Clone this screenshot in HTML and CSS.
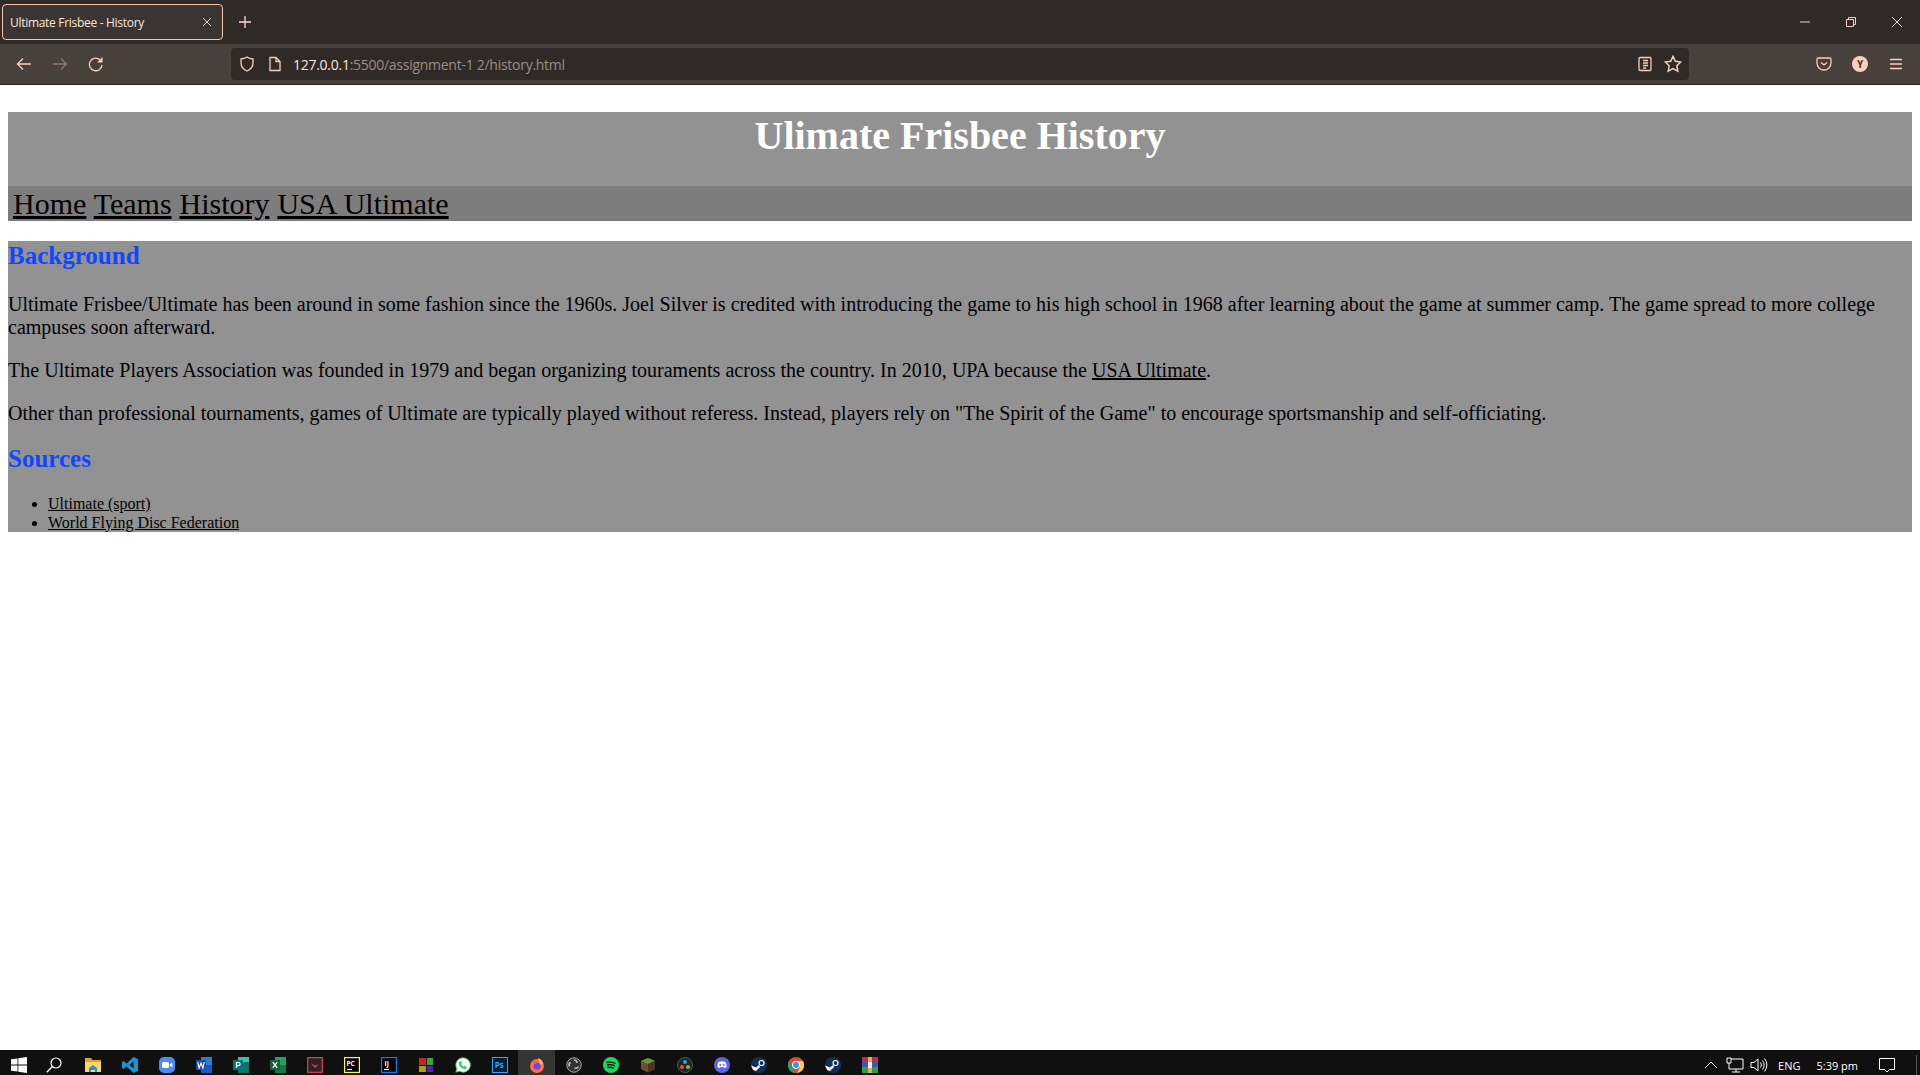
FILE: index.html
```html
<!DOCTYPE html>
<html lang="en">
<head>
<meta charset="utf-8">
<title>Ultimate Frisbee - History</title>
<link rel="stylesheet" href="styles.css">
</head>
<body>
<div class="window">
  <div class="tabbar">
    <div class="tab">
      <span class="tab-title">Ultimate Frisbee - History</span>
      <svg class="tab-close" viewBox="0 0 10 10"><path d="M1 1l8 8M9 1l-8 8"/></svg>
    </div>
    <svg class="new-tab" viewBox="0 0 12 12"><path d="M6 0v12M0 6h12"/></svg>
    <div class="win-controls">
      <svg class="win-btn" viewBox="0 0 12 12"><path d="M1 6h10"/></svg>
      <svg class="win-btn" viewBox="0 0 12 12"><path d="M1.500 3.500h7v7h-7zM3.500 3.500v-2h7v7h-2"/></svg>
      <svg class="win-btn" viewBox="0 0 12 12"><path d="M1 1l10 10M11 1L1 11"/></svg>
    </div>
  </div>
  <div class="toolbar">
    <div class="nav-btns">
      <span class="tb-cell"><svg class="ic" viewBox="0 0 16 16"><path d="M15 8H1.500M7 2.500L1.500 8 7 13.500"/></svg></span>
      <span class="tb-cell dim"><svg class="ic" viewBox="0 0 16 16"><path d="M1 8h13.500M9 2.500L14.500 8 9 13.500"/></svg></span>
      <span class="tb-cell"><svg class="ic" viewBox="0 0 16 16"><path d="M14 9a6.300 6.300 0 1 1-2-5.200"/><path class="ic-fill" d="M14.500 1v5.500H9z"/></svg></span>
    </div>
    <div class="urlbar">
      <svg class="ic shield" viewBox="0 0 16 16"><path d="M8 1c2 1.300 4 1.800 6 2v4c0 4-2.500 6.500-6 8-3.500-1.500-6-4-6-8V3c2-.2 4-.7 6-2z"/></svg>
      <svg class="ic page" viewBox="0 0 16 16"><path d="M3 1.500h6l4 4v9H3zM9 1.500v4h4"/></svg>
      <span class="url"><span class="url-host">127.0.0.1</span>:5500/assignment-1 2/history.html</span>
      <svg class="ic reader" viewBox="0 0 16 16"><path d="M3 1.500h10a1 1 0 0 1 1 1v11a1 1 0 0 1-1 1H3a1 1 0 0 1-1-1v-11a1 1 0 0 1 1-1zM6 4.500h5M6 7h5M6 9.500h5M6 12h3"/></svg>
      <svg class="ic star" viewBox="0 0 16 16"><path d="M8 1.200l2.100 4.400 4.800.6-3.500 3.300.9 4.800L8 12l-4.300 2.300.9-4.800L1.100 6.200l4.800-.6z"/></svg>
    </div>
    <div class="nav-btns">
      <span class="tb-cell"><svg class="ic" viewBox="0 0 16 16"><path d="M2.500 2h11A1.500 1.500 0 0 1 15 3.500V7a7 7 0 0 1-14 0V3.500A1.500 1.500 0 0 1 2.500 2zM5 6.500L8 9l3-2.500"/></svg></span>
      <span class="tb-cell"><span class="avatar">Y</span></span>
      <span class="tb-cell"><svg class="ic" viewBox="0 0 16 16"><path d="M2 3.500h12M2 8h12M2 12.500h12"/></svg></span>
    </div>
  </div>
  <main class="page-area">
    <header class="site-header">
      <h1>Ulimate Frisbee History</h1>
      <nav class="site-nav">
        <a href="#">Home</a>
        <a href="#">Teams</a>
        <a href="#">History</a>
        <a href="#">USA Ultimate</a>
      </nav>
    </header>
    <section class="content">
      <h2>Background</h2>
      <p>Ultimate Frisbee/Ultimate has been around in some fashion since the 1960s. Joel Silver is credited with introducing the game to his high school in 1968 after learning about the game at summer camp. The game spread to more college campuses soon afterward.</p>
      <p class="wide">The Ultimate Players Association was founded in 1979 and began organizing touraments across the country. In 2010, UPA because the <a href="#">USA Ultimate</a>.</p>
      <p>Other than professional tournaments, games of Ultimate are typically played without referess. Instead, players rely on "The Spirit of the Game" to encourage sportsmanship and self-officiating.</p>
      <h2>Sources</h2>
      <ul>
        <li><a href="#">Ultimate (sport)</a></li>
        <li><a href="#">World Flying Disc Federation</a></li>
      </ul>
    </section>
  </main>
  <footer class="taskbar">
    <span class="task"><svg class="ti" viewBox="0 0 16 16"><path fill="#fff" d="M0 2.300l6.500-.9v6.200H0zM7.300 1.300L16 0v7.600H7.300zM0 8.400h6.500v6.200L0 13.700zM7.300 8.400H16V16l-8.700-1.200z"/></svg></span>
    <span class="task"><svg class="ti search-ic" viewBox="0 0 16 16"><circle cx="10" cy="6" r="5" fill="none" stroke="#fff" stroke-width="1.200"/><path d="M6.400 9.600L.8 15.300" stroke="#fff" stroke-width="1.400"/></svg></span>
    <span class="task"><svg class="ti" viewBox="0 0 16 16"><path fill="#d9a531" d="M0 1h6l1.500 2H16v3H0z"/><path fill="#ffd665" d="M0 5h16v10H0z"/><path fill="#2b8ed8" d="M4 11l4-3 4 3v4H10v-2H6v2H4z"/></svg></span>
    <span class="task"><svg class="ti" viewBox="0 0 16 16"><path fill="#1f8fd6" d="M11.500 0L16 2v12l-4.500 2L4.500 9.600 1.500 12 0 11V5l1.500-1 3 2.400zM11.500 4.500L7.500 8l4 3.500z"/></svg></span>
    <span class="task"><svg class="ti" viewBox="0 0 16 16"><rect width="16" height="16" rx="5" fill="#4a8cf7"/><rect x="3" y="5" width="7" height="6" rx="1.500" fill="#fff"/><path fill="#fff" d="M10.800 7.500l2.500-2v5l-2.500-2z"/></svg></span>
    <span class="task"><svg class="ti" viewBox="0 0 16 16"><path fill="#2b7cd3" d="M5 0h11v16H5z"/><path fill="#185abd" d="M5 8h11v8H5z"/><rect y="3" width="10" height="10" fill="#1a4fa3"/><path d="M1.800 5l1.300 6 1.900-5 1.900 5 1.300-6" fill="none" stroke="#fff" stroke-width="1.100"/></svg></span>
    <span class="task"><svg class="ti" viewBox="0 0 16 16"><path fill="#33c4b8" d="M5 0h11v16H5z"/><path fill="#077568" d="M11 5h5v11H5v-3z"/><rect y="3" width="10" height="10" fill="#03787c"/><path d="M3.500 11V5.500h2a1.600 1.600 0 0 1 0 3.200h-2" fill="none" stroke="#fff" stroke-width="1.200"/></svg></span>
    <span class="task"><svg class="ti" viewBox="0 0 16 16"><path fill="#21a366" d="M5 0h11v8H5z"/><path fill="#107c41" d="M5 8h11v8H5z"/><rect y="3" width="10" height="10" fill="#185c37"/><path d="M2.800 5.200l4.400 5.600M7.200 5.200l-4.400 5.600" stroke="#fff" stroke-width="1.300"/></svg></span>
    <span class="task"><svg class="ti" viewBox="0 0 16 16"><rect x=".7" y=".7" width="14.600" height="14.600" fill="#2a2326" stroke="#e6404f" stroke-width="1.200"/><path d="M4 6l3.500 4.500h1.500L12 6.500 9.500 8.500H8z" fill="#e6404f"/></svg></span>
    <span class="task"><svg class="ti" viewBox="0 0 16 16"><rect x=".6" y=".6" width="14.800" height="14.800" fill="#000" stroke="#fcf84a" stroke-width="1.200"/><text class="logo-text" x="2.500" y="8.600">PC</text><path d="M3 12.500h5" stroke="#fff" stroke-width="1.200"/></svg></span>
    <span class="task"><svg class="ti" viewBox="0 0 16 16"><rect x=".6" y=".6" width="14.800" height="14.800" fill="#000" stroke="#087cfa" stroke-width="1.200"/><text class="logo-text" x="3.500" y="8.600">IJ</text><path d="M3 12.500h5" stroke="#fff" stroke-width="1.200"/></svg></span>
    <span class="task"><svg class="ti" viewBox="0 0 16 16"><path fill="#c4281c" d="M1 1h7v7H1z"/><path fill="#3fa535" d="M9 1h6v7H9z"/><path fill="#a6a21c" d="M1 9h7v6H1z"/><path fill="#5b1fb5" d="M9 9h6v6H9z"/></svg></span>
    <span class="task"><svg class="ti" viewBox="0 0 16 16"><path fill="#fff" stroke="#25d366" stroke-width=".8" d="M8 .8a7.200 7.200 0 0 0-6.200 10.800L.8 15.200l3.700-1A7.200 7.200 0 1 0 8 .8z"/><path fill="#25d366" d="M5.500 4c1 0 1.300 2 1.300 2.300 0 .5-.6.900-.5 1.200.5 1 1.300 1.800 2.300 2.200.4 0 .8-.8 1.200-.7.500.1 2 .8 2 1.200 0 1-1 1.700-2 1.700-3.400 0-6-3.500-6-5.700C3.800 5 4.500 4 5.500 4z"/></svg></span>
    <span class="task"><svg class="ti" viewBox="0 0 16 16"><rect x=".5" y=".5" width="15" height="15" fill="#001d34" stroke="#31a8ff"/><text class="logo-text ps" x="2.800" y="11">Ps</text></svg></span>
    <span class="task active"><svg class="ti" viewBox="0 0 16 16"><circle cx="8" cy="9" r="7" fill="#ff7139"/><path d="M9 1c3 1 5 3 5 6l-3 1z" fill="#ffbd4f"/><circle cx="8" cy="9" r="3.500" fill="#7542e5"/><path d="M3 5c2-2 5-1 6 1l-3 1z" fill="#ff4f5e"/></svg></span>
    <span class="task"><svg class="ti" viewBox="0 0 16 16"><circle cx="8" cy="8" r="7.200" fill="#333" stroke="#aaa" stroke-width="1"/><path d="M8 3a3 3 0 0 1 3 3M12.500 9.500a3 3 0 0 1-4 1.500M3.500 9.500a3 3 0 0 1 1-4" fill="none" stroke="#bbb" stroke-width="1.600"/></svg></span>
    <span class="task"><svg class="ti" viewBox="0 0 16 16"><circle cx="8" cy="8" r="8" fill="#1ed760"/><path d="M3.500 5.500c3-.8 6-.6 9 1M4 8c2.600-.7 5.300-.4 7.800.9M4.500 10.500c2.200-.5 4.400-.3 6.500.8" fill="none" stroke="#111" stroke-width="1.300"/></svg></span>
    <span class="task"><svg class="ti" viewBox="0 0 16 16"><path fill="#6f4f32" d="M1 4l7-3 7 3v8l-7 3.500L1 12z"/><path fill="#5f9e34" d="M1 4l7-3 7 3-7 3z"/><path fill="#4a3524" d="M8 7l7-3v8l-7 3.500z"/></svg></span>
    <span class="task"><svg class="ti" viewBox="0 0 16 16"><circle cx="8" cy="8" r="7.500" fill="#20252b" stroke="#555"/><circle cx="8" cy="5" r="2" fill="#3ea5dc"/><circle cx="5" cy="10" r="2" fill="#e2543d"/><circle cx="11" cy="10" r="2" fill="#8fbf3c"/></svg></span>
    <span class="task"><svg class="ti" viewBox="0 0 16 16"><circle cx="8" cy="8" r="8" fill="#5865f2"/><path fill="#fff" d="M4.500 5c2-.9 5-.9 7 0 .8 1.500 1.200 3.300 1 5-1 .7-1.800 1-2.500 1l-.5-1H6.500l-.5 1c-.7 0-1.500-.3-2.500-1-.2-1.700.2-3.500 1-5z"/><circle cx="6.300" cy="8" r="1" fill="#5865f2"/><circle cx="9.700" cy="8" r="1" fill="#5865f2"/></svg></span>
    <span class="task"><svg class="ti" viewBox="0 0 16 16"><circle cx="8" cy="8" r="8" fill="#10305a"/><circle cx="10.500" cy="6" r="2.500" fill="none" stroke="#fff" stroke-width="1.200"/><path fill="#fff" d="M0 8.500l5 2 3-2.500 1 2-3.500 3.500c-1.500.5-3 0-3.500-1z"/></svg></span>
    <span class="task"><svg class="ti" viewBox="0 0 16 16"><circle cx="8" cy="8" r="8" fill="#dd4b39"/><path fill="#1da462" d="M8 16A8 8 0 0 1 1 4l4 7z"/><path fill="#ffcd46" d="M8 4h7a8 8 0 0 1-6 12l3-6z"/><circle cx="8" cy="8" r="3.600" fill="#4c8bf5" stroke="#fff"/></svg></span>
    <span class="task"><svg class="ti" viewBox="0 0 16 16"><circle cx="8" cy="8" r="8" fill="#10305a"/><circle cx="10.500" cy="6" r="2.500" fill="none" stroke="#fff" stroke-width="1.200"/><path fill="#fff" d="M0 8.500l5 2 3-2.500 1 2-3.500 3.500c-1.500.5-3 0-3.500-1z"/></svg></span>
    <span class="task"><svg class="ti" viewBox="0 0 16 16"><path fill="#c2284d" d="M0 0h16v5H0z"/><path fill="#3f55b5" d="M0 5h16v5H0z"/><path fill="#2f9e44" d="M0 10h16v6H0z"/><path fill="#e8b23a" d="M6 0h4v16H6z"/><rect x="6" y="5" width="4" height="6" fill="#eee"/></svg></span>
    <div class="tray">
      <svg class="tray-ic chevron" viewBox="0 0 12 12"><path d="M0 9l6-6 6 6"/></svg>
      <svg class="tray-ic net" viewBox="0 0 18 16"><path d="M5 2h12v10H3M1 1h4v5H1zM3 6v6M10 12v3M6 15h8"/></svg>
      <svg class="tray-ic vol" viewBox="0 0 18 16"><path d="M1 5.500h3L8 2v12l-4-3.500H1zM10.500 5.500a4 4 0 0 1 0 5M12.500 3.500a7 7 0 0 1 0 9M14.500 1.500a10 10 0 0 1 0 13"/></svg>
      <span class="tray-text lang">ENG</span>
      <span class="tray-text clock">5:39 pm</span>
      <svg class="tray-ic note" viewBox="0 0 16 16"><path d="M.5 1.500h15v11h-5l-2.500 2.500-2.500-2.500h-5z"/></svg>
      <span class="show-desktop"></span>
    </div>
  </footer>
</div>
</body>
</html>
```
FILE: styles.css
```css
* { box-sizing: border-box; }
html, body { margin: 0; height: 100%; }
body { overflow: hidden; background: #fff; font-family: "Liberation Serif", serif; }
.window { display: flex; flex-direction: column; height: 1075px; }

.tabbar { flex: 0 0 44px; display: flex; align-items: flex-start; background: #2f2a28; font-family: "Open Sans", sans-serif; }
.tab { width: 221px; height: 36px; margin: 4px 0 0 2px; padding: 0 8px 0 7px; display: flex; align-items: center; justify-content: space-between; background: #3a3533; border: 1px solid #f5c8b0; border-radius: 4px; }
.tab-title { color: #fbe6da; font-size: 12px; letter-spacing: -.3px; white-space: nowrap; }
.tab-close { width: 10px; height: 10px; margin-right: 2px; fill: none; stroke: #e6cfc2; stroke-width: 1; }
.new-tab { width: 12px; height: 12px; margin: 16px 0 0 16px; fill: none; stroke: #fbdccb; stroke-width: 1.300; }
.win-controls { margin-left: auto; display: flex; }
.win-btn { width: 46px; height: 12px; margin-top: 16px; fill: none; stroke: #fbcfb9; stroke-width: 1; }

.toolbar { flex: 0 0 41px; display: flex; align-items: center; padding: 0 6px; background: #48403b; border-bottom: 1px solid #231f1e; font-family: "Open Sans", sans-serif; }
.nav-btns { display: flex; flex: 0 0 108px; }
.tb-cell { width: 36px; height: 32px; display: flex; align-items: center; justify-content: center; }
.dim { opacity: .4; }
.ic { width: 16px; height: 16px; fill: none; stroke: #fbcdb8; stroke-width: 1.300; }
.ic-fill { fill: #fbcdb8; stroke: none; }
.avatar { width: 16px; height: 16px; border-radius: 50%; background: #fbcfbd; color: #3b3230; font: bold 10px/16px "Open Sans", sans-serif; text-align: center; }
.urlbar { flex: 1; height: 32px; margin: 0 117px; padding: 0 7px 0 8px; display: flex; align-items: center; background: #2f2a28; border-radius: 4px; }
.page { margin-left: 12px; }
.url { margin-left: 10px; flex: 1; color: #9c8d85; font-size: 14px; letter-spacing: -.27px; white-space: nowrap; }
.url-host { color: #fbe6da; }
.star { margin-left: 11px; width: 18px; height: 18px; }

.page-area { flex: 1; padding: 27px 8px 0; overflow: hidden; }
.site-header { background: #929292; }
.site-header h1 { margin: 0; padding: 1px 0 0; height: 74px; font-size: 40px; line-height: 46px; text-align: center; color: #fff; }
.site-nav { height: 35px; padding-left: 5px; background: #7d7d7d; font-size: 30px; line-height: 35px; word-spacing: .4px; }
.site-nav a, .content a { color: #000; }
.content { height: 291px; margin-top: 20px; padding-top: 1px; background: #929292; overflow: hidden; color: #000; }
.content h2 { margin: 0; font-size: 25px; line-height: 28px; color: #0f47ff; }
.content p { margin: 20px 0; font-size: 20px; line-height: 23px; }
.content h2:first-child + p { margin-top: 23px; }
.content p.wide { word-spacing: .11px; }
.content ul { margin: 22px 0 0; padding-left: 40px; font-size: 16px; line-height: 18.500px; }

.taskbar { flex: 0 0 25px; display: flex; align-items: center; background: #101010; overflow: hidden; }
.task { flex: 0 0 37px; height: 25px; padding-top: 5px; display: flex; align-items: center; justify-content: center; }
.active { background: #353535; }
.ti { width: 16px; height: 16px; }
.search-ic { margin-right: 3px; }
.logo-text { fill: #fff; font: bold 6.500px "Open Sans", sans-serif; }
.ps { fill: #31a8ff; font-size: 8px; }
.tray { margin-left: auto; display: flex; align-items: center; height: 25px; padding-top: 5px; color: #fff; font-family: "Open Sans", sans-serif; }
.tray-ic { fill: none; stroke: #fff; stroke-width: 1; }
.chevron { width: 12px; height: 12px; margin-right: 9px; }
.net { width: 18px; height: 16px; margin-right: 6px; }
.vol { width: 18px; height: 16px; margin-right: 10px; }
.tray-text { font-size: 11px; white-space: nowrap; }
.lang { margin-right: 16px; }
.clock { margin-right: 21px; }
.note { width: 16px; height: 16px; margin-right: 21px; }
.show-desktop { width: 1px; height: 20px; background: #555; margin-right: 3px; }
```
